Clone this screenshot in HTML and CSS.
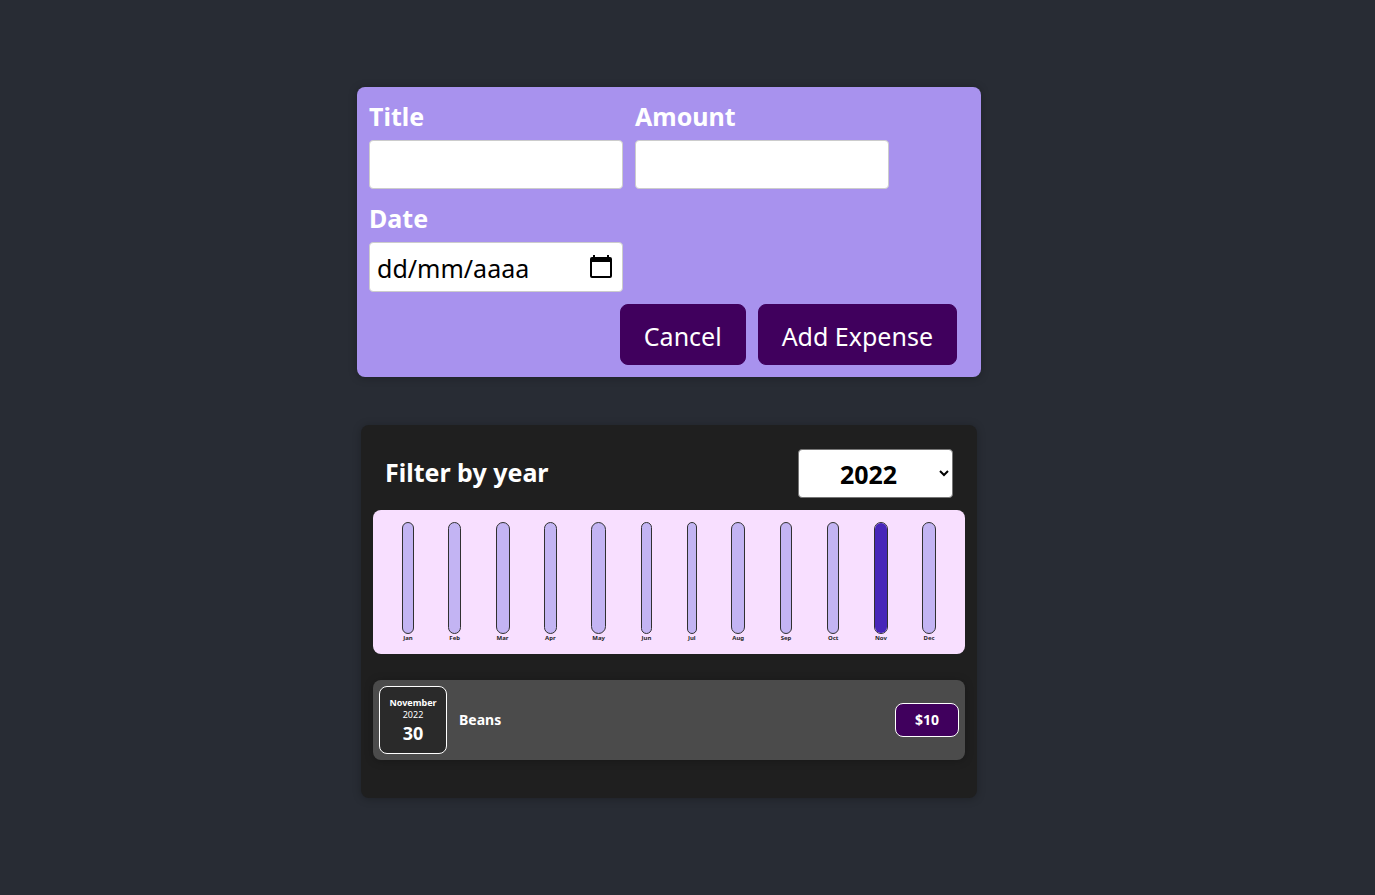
FILE: index.html
```html
<!DOCTYPE html>
<html lang="en">
<head>
<meta charset="utf-8">
<meta name="viewport" content="width=device-width, initial-scale=1">
<title>Expenses</title>
<link rel="stylesheet" href="styles.css">
</head>
<body>
<main class="page">
  <form class="new-expense">
    <div class="fields">
      <div class="field">
        <label for="title">Title</label>
        <input id="title" type="text">
      </div>
      <div class="field">
        <label for="amount">Amount</label>
        <input id="amount" type="text" inputmode="decimal">
      </div>
      <div class="field">
        <label for="date">Date</label>
        <div class="date-control">
          <input id="date" type="text" placeholder="dd/mm/aaaa">
          <button class="picker" type="button" aria-label="Open calendar">
            <svg viewBox="0 0 24 26" width="24" height="26" aria-hidden="true">
              <path fill-rule="evenodd" d="M4 1h2v2h12V1h2v2h1a2 2 0 0 1 2 2v17a2 2 0 0 1-2 2H3a2 2 0 0 1-2-2V5a2 2 0 0 1 2-2h1zM3 8v14h18V8z"/>
            </svg>
          </button>
        </div>
      </div>
    </div>
    <div class="actions">
      <button class="action" type="button">Cancel</button>
      <button class="action" type="submit">Add Expense</button>
    </div>
  </form>

  <section class="expenses">
    <div class="filter">
      <label for="year">Filter by year</label>
      <select id="year"><option>2022</option></select>
    </div>
    <div class="chart">
      <div class="month"><div class="bar"></div><span>Jan</span></div>
      <div class="month"><div class="bar"></div><span>Feb</span></div>
      <div class="month"><div class="bar"></div><span>Mar</span></div>
      <div class="month"><div class="bar"></div><span>Apr</span></div>
      <div class="month"><div class="bar"></div><span>May</span></div>
      <div class="month"><div class="bar"></div><span>Jun</span></div>
      <div class="month"><div class="bar"></div><span>Jul</span></div>
      <div class="month"><div class="bar"></div><span>Aug</span></div>
      <div class="month"><div class="bar"></div><span>Sep</span></div>
      <div class="month"><div class="bar"></div><span>Oct</span></div>
      <div class="month"><div class="bar"><div class="fill" style="height:100%"></div></div><span>Nov</span></div>
      <div class="month"><div class="bar"></div><span>Dec</span></div>
    </div>
    <ul class="list">
      <li class="item">
        <div class="item-date">
          <div class="item-month">November</div>
          <div class="item-year">2022</div>
          <div class="item-day">30</div>
        </div>
        <h2>Beans</h2>
        <div class="price">$10</div>
      </li>
    </ul>
  </section>
</main>
</body>
</html>
```

FILE: styles.css
```css
* { box-sizing: border-box; }

body {
  margin: 0;
  min-height: 100vh;
  background: #282c34;
  color: #fff;
  font-family: "Segoe UI", "Noto Sans", "Open Sans", sans-serif;
}

input, select, button { font: inherit; }

.page {
  display: flex;
  flex-direction: column;
  align-items: center;
  gap: 48px;
  padding: 87px 37px 96px 0;
}

.new-expense {
  width: 95%;
  max-width: 624px;
  padding: 12px;
  border-radius: 8px;
  background: #a892ee;
  box-shadow: 0 1px 8px rgba(0, 0, 0, .25);
  font-size: 25px;
}

.fields {
  display: flex;
  flex-wrap: wrap;
  gap: 12px;
}

.field {
  display: flex;
  flex-direction: column;
  gap: 6px;
  width: 254px;
}

.field label {
  font-weight: 700;
  line-height: 35px;
}

.field input {
  width: 100%;
  height: 49px;
  padding: 2px 7px 0;
  border: 1px solid #ccc;
  border-radius: 4px;
  background: #fff;
  color: #000;
}

.field input::placeholder { color: #000; opacity: 1; }

.date-control { position: relative; }

.date-control input { display: block; height: 50px; }

.picker {
  position: absolute;
  top: 12px;
  right: 10px;
  display: flex;
  padding: 0;
  border: 0;
  background: none;
  color: #000;
}

.actions {
  display: flex;
  justify-content: flex-end;
  gap: 12px;
  padding: 12px 12px 0 0;
}

.action {
  height: 61px;
  padding: 2px 23px 0;
  border: 1px solid #40005d;
  border-radius: 8px;
  background: #40005d;
  color: #fff;
}

.expenses {
  width: 94%;
  max-width: 616px;
  padding: 12px 12px 38px;
  border-radius: 8px;
  background: #1f1f1f;
  box-shadow: 0 1px 8px rgba(0, 0, 0, .25);
}

.filter {
  display: flex;
  justify-content: space-between;
  align-items: center;
  padding: 12px;
  font-size: 25px;
  font-weight: 700;
}

.filter label { line-height: 36px; padding-bottom: 4px; }

.filter select {
  width: 155px;
  height: 49px;
  padding: 1px 2px 0 0;
  border: 1px solid #767676;
  border-radius: 4px;
  background-color: #fff;
  color: #000;
  text-align: center;
  text-align-last: center;
}

.chart {
  display: flex;
  justify-content: space-around;
  padding: 12px;
  border-radius: 8px;
  background: #f8dfff;
}

.month {
  display: flex;
  flex-direction: column;
  color: #1f1f1f;
  font-size: 6px;
  font-weight: 700;
  line-height: 8px;
  text-align: center;
}

.month span { padding: 0 1px; }

.bar {
  display: flex;
  align-items: flex-end;
  height: 112px;
  border: 1px solid #313131;
  border-radius: 8px;
  background: #c3b4f3;
  overflow: hidden;
}

.fill { width: 100%; height: 0; background: #4826b9; }

.list {
  margin: 26px 0 0;
  padding: 0;
  list-style: none;
}

.item {
  display: flex;
  align-items: center;
  gap: 12px;
  padding: 6px;
  border-radius: 8px;
  background: #4b4b4b;
  box-shadow: 0 1px 8px rgba(0, 0, 0, .25);
}

.item-date {
  display: flex;
  flex-direction: column;
  align-items: center;
  justify-content: center;
  width: 68px;
  height: 68px;
  padding-top: 2px;
  border: 1px solid #fff;
  border-radius: 8px;
  background: #2a2a2a;
}

.item-month { font-size: 9px; font-weight: 700; line-height: 12px; }
.item-year { font-size: 9px; line-height: 12px; }
.item-day { font-size: 18px; font-weight: 700; line-height: 24px; }

.item h2 {
  flex: 1;
  margin: 0;
  font-size: 14px;
  line-height: 20px;
}

.price {
  width: 64px;
  border: 1px solid #fff;
  border-radius: 8px;
  background: #40005d;
  font-size: 14px;
  font-weight: 700;
  line-height: 32px;
  text-align: center;
}
```
